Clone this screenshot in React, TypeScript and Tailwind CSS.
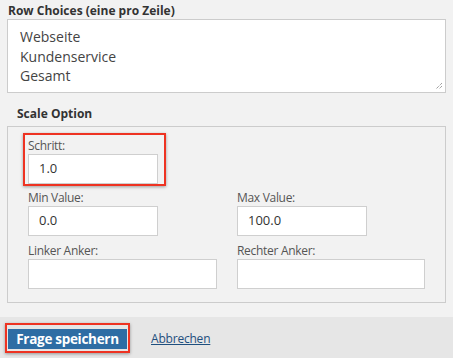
import React from 'react'

const font = { fontFamily: '"Open Sans", "Liberation Sans", sans-serif' }

function Field({ label, value, width }: { label: string; value?: string; width: string }) {
  return (
    <div className="flex flex-col">
      <label className="text-[12px] leading-[16px] text-[#555] tracking-[-0.3px]">{label}</label>
      <div className={`${width} h-[30px] bg-white border border-[#cfcfcf] flex items-center pl-[10px] text-[13px] text-[#333]`}>
        {value}
      </div>
    </div>
  )
}

export default function App() {
  return (
    <div className="w-[453px] h-[358px] bg-[#f2f2f2] flex flex-col overflow-hidden" style={font}>
      <div className="flex-1 px-[7px] pt-[4px]">
        <div className="text-[12px] leading-[14px] font-bold text-[#333] pl-[1px]">
          Row Choices (eine pro Zeile)
        </div>
        <div className="relative mt-[1px] h-[74px] bg-white border border-[#cccccc] pl-[12px] pt-[7px] text-[14px] leading-[19.5px] text-[#444]">
          <div>Webseite</div>
          <div>Kundenservice</div>
          <div>Gesamt</div>
          {/* resize grip */}
          <svg className="absolute right-[2px] bottom-[2px]" width="8" height="8" viewBox="0 0 8 8">
            <path d="M7 1L1 7M7 4L4 7" stroke="#777" strokeWidth="1" strokeDasharray="1 1" />
          </svg>
        </div>

        <div className="mt-[14px] ml-[10px] text-[12px] leading-[14px] font-bold text-[#333]">
          Scale Option
        </div>

        <div className="mt-[5px] h-[177px] border border-[#cccccc] pl-[20px] pt-[11px]">
          <div className="relative w-[130px]">
            <Field label="Schritt:" value="1.0" width="w-[130px]" />
            <span className="absolute -left-[5px] -top-[5px] w-[143px] h-[53px] border-[2.5px] border-[#ee3322] shadow-[0_1px_3px_rgba(0,0,0,0.35)] pointer-events-none" />
          </div>
          <div className="grid grid-cols-[209px_1fr] mt-[6px] gap-y-[7px]">
            <Field label="Min Value:" value="0.0" width="w-[130px]" />
            <Field label="Max Value:" value="100.0" width="w-[130px]" />
            <Field label="Linker Anker:" width="w-[189px]" />
            <Field label="Rechter Anker:" width="w-[188px]" />
          </div>
        </div>
      </div>

      <div className="h-[41px] bg-[#e6e6e6] flex items-center pl-[5px] gap-[21px]">
        <div className="border-2 border-[#ee3322] p-[1px] shadow-[0_1px_3px_rgba(0,0,0,0.35)]">
          <button className="w-[119px] h-[20px] bg-[#2e6da4] text-white text-[13.5px] font-bold leading-[20px] tracking-[-0.3px]">
            Frage speichern
          </button>
        </div>
        <a href="#" className="text-[12px] text-[#1f4f7e] underline mt-[2px] tracking-[-0.2px]">
          Abbrechen
        </a>
      </div>
    </div>
  )
}
